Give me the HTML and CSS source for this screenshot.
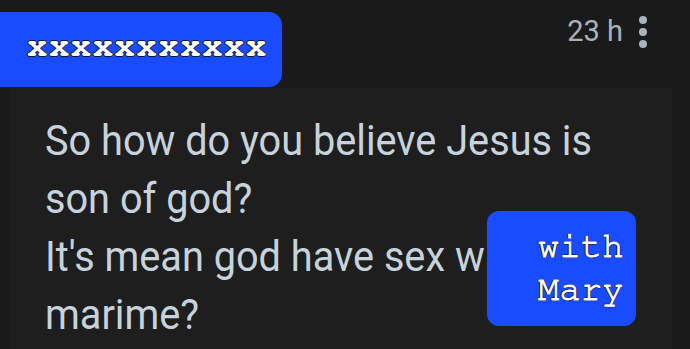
FILE: index.html
```html
<!DOCTYPE html>
<html>
<head>
<meta charset="utf-8">
<link rel="stylesheet" href="styles.css">
</head>
<body>
<div class="page">
  <div class="header">
    <div class="tag">xxxxxxxxxxx</div>
    <div class="meta">
      <span class="time">23 h</span>
      <span class="dots"><i></i><i></i><i></i></span>
    </div>
  </div>
  <div class="card">
    <p class="msg">So how do you believe Jesus is<br>son of god?<br>It's mean god have sex with<br>marime?</p>
    <div class="sticker">with<br>Mary</div>
  </div>
</div>
</body>
</html>
```
FILE: styles.css
```css
html, body {
  margin: 0;
  padding: 0;
  background: #1a1a1a;
  width: 690px;
  height: 349px;
  overflow: hidden;
}
.page {
  position: relative;
  height: 349px;
}
.header {
  display: flex;
  justify-content: space-between;
  align-items: flex-start;
  padding-top: 12px;
  height: 88px;
  box-sizing: border-box;
}
.tag {
  background: #1a4cff;
  border-radius: 0 13px 13px 0;
  width: 282px;
  height: 75px;
  box-sizing: border-box;
  padding-left: 27px;
  display: flex;
  align-items: center;
  font-family: "Nimbus Mono PS", "FreeMono", "Courier 10 Pitch", "Liberation Mono", monospace;
  font-weight: bold;
  font-size: 34px;
  letter-spacing: 1.5px;
  color: #fff;
  text-shadow: 1px 0 0 #0d1530, -1px 0 0 #0d1530, 0 1px 0 #0d1530, 0 -1px 0 #0d1530;
  padding-bottom: 8px;
}
.meta {
  display: flex;
  align-items: flex-start;
  gap: 16px;
  padding-right: 43px;
  padding-top: 2px;
}
.time {
  font-family: Roboto, sans-serif;
  font-size: 29px;
  line-height: 34px;
  color: #a9b2ba;
}
.dots {
  display: flex;
  flex-direction: column;
  gap: 4px;
  padding-top: 2px;
}
.dots i {
  display: block;
  width: 8px;
  height: 8px;
  border-radius: 50%;
  background: #a9b4bd;
}
.card {
  position: relative;
  margin-left: 10px;
  margin-right: 18px;
  background: #1e1e1e;
  height: 261px;
  padding: 24px 0 0 35px;
  box-sizing: border-box;
}
.msg {
  margin: 0;
  font-family: Roboto, sans-serif;
  font-size: 42px;
  line-height: 58px;
  color: #c6d3dd;
  transform: scaleX(0.945);
  transform-origin: left top;
  white-space: nowrap;
}
.sticker {
  position: absolute;
  left: 477px;
  top: 123px;
  width: 149px;
  height: 115px;
  box-sizing: border-box;
  background: #1a4cff;
  border-radius: 12px;
  font-family: "Nimbus Mono PS", "FreeMono", "Courier 10 Pitch", "Liberation Mono", monospace;
  font-size: 35px;
  line-height: 43px;
  letter-spacing: 0.5px;
  color: #fff;
  -webkit-text-stroke: 0.9px #fff;
  text-shadow: 1.2px 0 0 #0d1530, -1.2px 0 0 #0d1530, 0 1.2px 0 #0d1530, 0 -1.2px 0 #0d1530;
  text-align: right;
  padding: 14px 12px 0 0;
}
```
